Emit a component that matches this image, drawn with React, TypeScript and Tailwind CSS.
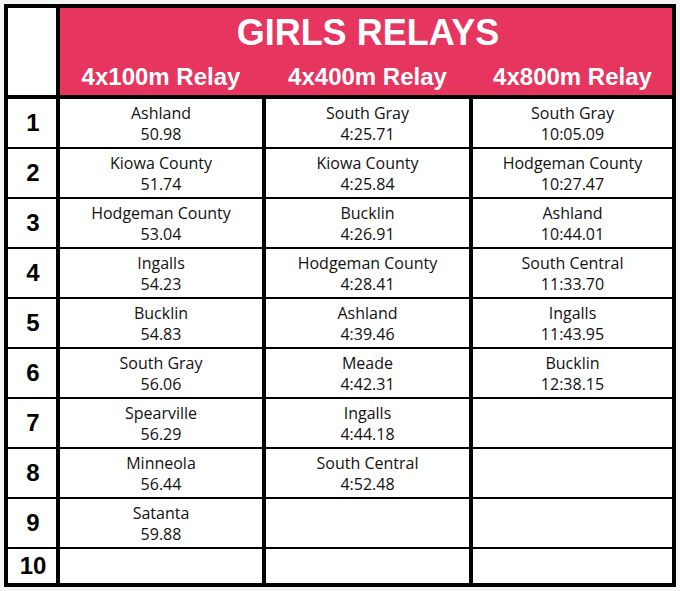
import React from 'react';

type Entry = { team: string; time: string };

const relay100: Entry[] = [
  { team: 'Ashland', time: '50.98' },
  { team: 'Kiowa County', time: '51.74' },
  { team: 'Hodgeman County', time: '53.04' },
  { team: 'Ingalls', time: '54.23' },
  { team: 'Bucklin', time: '54.83' },
  { team: 'South Gray', time: '56.06' },
  { team: 'Spearville', time: '56.29' },
  { team: 'Minneola', time: '56.44' },
  { team: 'Satanta', time: '59.88' },
];

const relay400: Entry[] = [
  { team: 'South Gray', time: '4:25.71' },
  { team: 'Kiowa County', time: '4:25.84' },
  { team: 'Bucklin', time: '4:26.91' },
  { team: 'Hodgeman County', time: '4:28.41' },
  { team: 'Ashland', time: '4:39.46' },
  { team: 'Meade', time: '4:42.31' },
  { team: 'Ingalls', time: '4:44.18' },
  { team: 'South Central', time: '4:52.48' },
];

const relay800: Entry[] = [
  { team: 'South Gray', time: '10:05.09' },
  { team: 'Hodgeman County', time: '10:27.47' },
  { team: 'Ashland', time: '10:44.01' },
  { team: 'South Central', time: '11:33.70' },
  { team: 'Ingalls', time: '11:43.95' },
  { team: 'Bucklin', time: '12:38.15' },
];

const columns = [relay100, relay400, relay800];
const places = [1, 2, 3, 4, 5, 6, 7, 8, 9, 10];

const Cell: React.FC<{ entry?: Entry }> = ({ entry }) => (
  <div className="bg-white flex flex-col items-center justify-center pt-[2px] text-[16px] leading-[21px] text-[#111] font-['Open_Sans',sans-serif]">
    {entry && (
      <>
        <span>{entry.team}</span>
        <span>{entry.time}</span>
      </>
    )}
  </div>
);

export default function App() {
  return (
    <div className="min-h-[591px] bg-[#f4f4f4] p-1">
      <div className="grid grid-cols-[48px_202px_203px_199px] grid-rows-[89px_repeat(9,48px)_34px] gap-x-[4px] gap-y-[2px] bg-black border-4 border-black w-[672px]">
        <div className="bg-white border-b-2 border-black" />
        <div className="col-span-3 bg-[#e6355f] border-b-2 border-black text-white font-['Liberation_Sans',Arial,sans-serif] font-bold pt-[5px]">
          <div className="text-center text-[36px] leading-[40px] pl-[4px]">GIRLS RELAYS</div>
          <div className="grid grid-cols-[202px_203px_199px] gap-x-[4px] mt-[9px] text-[24px] leading-[30px] text-center">
            <span>4x100m Relay</span>
            <span>4x400m Relay</span>
            <span>4x800m Relay</span>
          </div>
        </div>
        {places.map((place) => (
          <React.Fragment key={place}>
            <div className="bg-white flex items-center justify-center pl-[2px] font-['Liberation_Sans',Arial,sans-serif] font-bold text-[24px] text-black">
              {place}
            </div>
            {columns.map((col, c) => (
              <Cell key={c} entry={col[place - 1]} />
            ))}
          </React.Fragment>
        ))}
      </div>
    </div>
  );
}
